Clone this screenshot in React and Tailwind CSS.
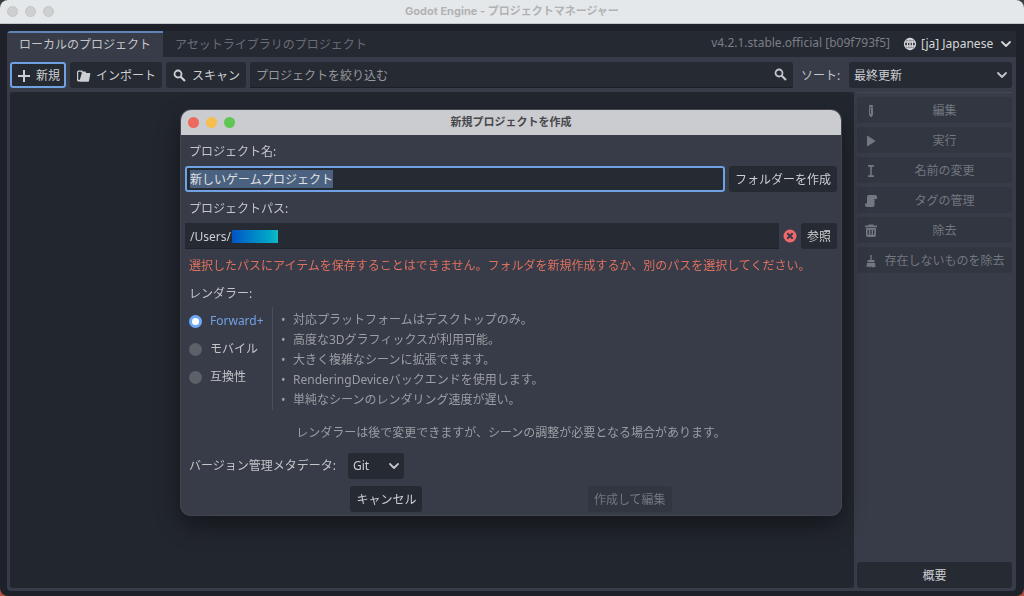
import { useEffect, useRef, useState } from 'react';

const Icon = ({ children, className = '' }) => (
  <svg viewBox="0 0 16 16" fill="currentColor" aria-hidden="true" className={`size-4 shrink-0 ${className}`}>
    {children}
  </svg>
);

const PlusIcon = () => (
  <Icon>
    <path d="M7 2v5H2v2h5v5h2V9h5V7H9V2z" />
  </Icon>
);

const FolderIcon = () => (
  <Icon>
    <path d="M2.500 2.500A1.500 1.500 0 0 0 1 4V12A1.500 1.500 0 0 0 2.500 13.500H4V12L2.200 11.500V4.200A.5 .5 0 0 1 2.700 3.700H5A.5 .5 0 0 1 5.500 4.200V5H10V4.500A1 1 0 0 0 9 3.500H7L6 2.500z" />
    <path d="M6.500 5a1 1 0 0 0-1 .8V6.500H5.300L3.600 12.700a1 1 0 0 0 1 1H12a1 1 0 0 0 1-.8L14.200 6.500V5z" />
  </Icon>
);

const SearchIcon = () => (
  <Icon>
    <circle cx="6" cy="6" r="3.500" fill="none" stroke="currentColor" strokeWidth="1.800" />
    <path d="M8.500 8.500l4.500 4.500" stroke="currentColor" strokeWidth="2.200" />
  </Icon>
);

const GlobeIcon = () => (
  <Icon>
    <g fill="none" stroke="currentColor" strokeWidth="1.300">
      <circle cx="8" cy="8" r="5.500" />
      <ellipse cx="8" cy="8" rx="2.500" ry="5.500" />
      <path d="M8 2.500v11M3 6h10M3 10h10" />
    </g>
  </Icon>
);

const ChevronIcon = ({ className }) => (
  <Icon className={className}>
    <path d="M4 6l4 4 4-4" fill="none" stroke="currentColor" strokeWidth="1.800" strokeLinecap="round" strokeLinejoin="round" />
  </Icon>
);

const ErrorIcon = () => (
  <Icon className="text-[#f0686b]">
    <circle cx="8" cy="8" r="6.500" />
    <path d="M5.300 5.300l5.400 5.400m0-5.400l-5.400 5.400" stroke="#373c48" strokeWidth="2" />
  </Icon>
);

const actions = [
  {
    label: '編集',
    icon: (
      <Icon>
        <path d="M7 2a1 1 0 0 0-1 1v1h4V3a1 1 0 0 0-1-1z" />
        <path fillRule="evenodd" d="M6 4.600v7.400l2 2.500 2-2.500V4.600zm1.200 1V11h.8V5.600z" />
      </Icon>
    ),
  },
  { label: '実行', icon: <Icon><path d="M4 12.500a.7 .7 0 0 0 1 .6l7-4.500a.7 .7 0 0 0 0-1.200L5 2.900a.7 .7 0 0 0-1 .6z" /></Icon> },
  { label: '名前の変更', icon: <Icon><path d="M5 2v1.700h2.200v8.600H5V14h6v-1.700H8.800V3.700H11V2z" /></Icon> },
  { label: 'タグの管理', icon: <Icon><path d="M6 2a2 2 0 0 0-2 2v6.500H2v1.500a2 2 0 0 0 2 2h5.500a2 2 0 0 0 2-2V6H14V4a2 2 0 0 0-2-2z" /></Icon> },
  {
    label: '除去',
    icon: (
      <Icon>
        <path d="M5.500 1.500v1H2v1.700h12V2.500h-3.500v-1z" />
        <path fillRule="evenodd" d="M3 5v7a2 2 0 0 0 2 2h6a2 2 0 0 0 2-2V5zm1.700 1.700h1.200v5H4.700zm2.700 0h1.200v5H7.400zm2.700 0h1.200v5h-1.200z" />
      </Icon>
    ),
  },
  { label: '存在しないものを除去', icon: <Icon><path d="M7.300 2v5H4.500v2.300h7V7H8.700V2zM4 10l-.5 4 2.700-.5v.7l2.600-.7v.7l3.700-.2-.5-4z" /></Icon> },
];

const renderers = ['Forward+', 'モバイル', '互換性'];

const rendererInfo = [
  '対応プラットフォームはデスクトップのみ。',
  '高度な3Dグラフィックスが利用可能。',
  '大きく複雑なシーンに拡張できます。',
  'RenderingDeviceバックエンドを使用します。',
  '単純なシーンのレンダリング速度が遅い。',
];

const Button = ({ children, className = '', ...props }) => (
  <button
    type="button"
    className={`flex h-[26px] shrink-0 items-center gap-1 rounded-[3px] bg-[#262a32] px-1.5 pt-0.5 text-[#cdcfd2] disabled:bg-[#313641] disabled:text-[#73777f] ${className}`}
    {...props}
  >
    {children}
  </button>
);

const NewProjectDialog = () => {
  const nameRef = useRef(null);
  const [name, setName] = useState('新しいゲームプロジェクト');
  const [path, setPath] = useState('/Users/');
  const [renderer, setRenderer] = useState('Forward+');

  // Select the default name so that typing replaces it
  useEffect(() => {
    nameRef.current.focus();
    nameRef.current.select();
  }, []);

  return (
    <div
      role="dialog"
      aria-labelledby="dialog-title"
      className="w-[660px] max-w-full overflow-hidden rounded-[10px] bg-[#373c48] shadow-[0_10px_24px_rgba(0,0,0,0.45)] ring-1 ring-[#41454f]"
    >
      <header className="relative flex h-[25px] items-center justify-center bg-[#cbccd0]">
        <div className="absolute left-[7px] flex gap-[7px]">
          <span className="size-[11px] rounded-full bg-[#ed6a5e]" />
          <span className="size-[11px] rounded-full bg-[#f5bf4f]" />
          <span className="size-[11px] rounded-full bg-[#61c554]" />
        </div>
        <h2 id="dialog-title" className="text-[11px] font-bold text-[#47484b]">新規プロジェクトを作成</h2>
      </header>

      <form className="flex flex-col px-1 pt-1 pb-[3px]" onSubmit={(e) => e.preventDefault()}>
        <label htmlFor="project-name" className="flex h-[26px] items-center px-1">プロジェクト名:</label>
        <div className="mt-px flex gap-1">
          <input
            id="project-name"
            ref={nameRef}
            value={name}
            onChange={(e) => setName(e.target.value)}
            className="h-[26px] min-w-0 flex-1 rounded-[3px] border-2 border-[#70a1e3] bg-[#262a32] px-[3px] text-[#e0e1e3] outline-none selection:bg-[#4a6180] selection:text-[#e0e1e3]"
          />
          <Button>フォルダーを作成</Button>
        </div>

        <label htmlFor="project-path" className="mt-1 flex h-[26px] items-center px-1">プロジェクトパス:</label>
        <div className="mt-px flex items-center gap-[3px]">
          <div className="relative min-w-0 flex-1">
            <input
              id="project-path"
              value={path}
              onChange={(e) => setPath(e.target.value)}
              className="h-[26px] w-full border-b border-[#1f2228] bg-[#262a32] px-[5px] pt-0.5 text-[#cdcfd2] outline-none"
            />
            <span className="absolute top-[7px] left-[47px] h-[13px] w-[46px] bg-linear-to-r from-[#0453c4] to-[#14b8c6]" />
          </div>
          <ErrorIcon />
          <Button>参照</Button>
        </div>
        <p className="mt-[5px] flex h-6 items-center px-1 text-[#e0705f]">
          選択したパスにアイテムを保存することはできません。フォルダを新規作成するか、別のパスを選択してください。
        </p>

        <fieldset className="mt-1">
          <legend className="flex h-6 items-center px-1">レンダラー:</legend>
          <div className="mt-px flex">
            <div className="flex w-[88px] flex-col border-r border-[#4a4e58] pb-[18px]">
              {renderers.map((item) => (
                <label key={item} className="flex h-7 items-center gap-2 pl-1 has-checked:text-[#70a1e3]">
                  <input
                    type="radio"
                    name="renderer"
                    checked={renderer === item}
                    onChange={() => setRenderer(item)}
                    className="size-[13px] appearance-none rounded-full bg-[#5c6068] checked:border-[3px] checked:border-[#70a8f5] checked:bg-white"
                  />
                  {item}
                </label>
              ))}
            </div>
            <ul className="pt-[3px] pl-2 text-[#9b9ea4]">
              {rendererInfo.map((line) => (
                <li key={line} className="flex h-5 items-center gap-2">
                  <span className="w-1 shrink-0">•</span>
                  {line}
                </li>
              ))}
            </ul>
          </div>
        </fieldset>

        <p className="mt-[11px] flex h-6 items-center justify-center text-[#9b9ea4]">
          レンダラーは後で変更できますが、シーンの調整が必要となる場合があります。
        </p>

        <div className="mt-2 flex items-center">
          <label htmlFor="vcs" className="w-[163px] px-1">バージョン管理メタデータ:</label>
          <div className="relative w-14">
            <select id="vcs" className="h-[26px] w-full appearance-none rounded-[3px] bg-[#262a32] px-[5px] text-[#cdcfd2]">
              <option>Git</option>
              <option>なし</option>
            </select>
            <ChevronIcon className="pointer-events-none absolute top-[5px] right-0.5" />
          </div>
        </div>

        <div className="mt-[7px] flex justify-evenly">
          <Button>キャンセル</Button>
          <Button disabled>作成して編集</Button>
        </div>
      </form>
    </div>
  );
};

const App = () => {
  const [filter, setFilter] = useState('');

  return (
    <div className="bg-linear-to-b from-[#3c3d38] to-[#b0503f] font-['Noto_Sans','Noto_Sans_CJK_JP',sans-serif] text-xs text-[#c3c5c9]">
      <div className="flex h-screen flex-col overflow-hidden rounded-lg bg-[#1e2129]">
        {/* Window title bar */}
        <header className="relative flex h-6 shrink-0 items-center justify-center border-b border-[#c4c7ca] bg-[#e5e8eb]">
          <div className="absolute left-[7px] flex gap-[7px]">
            <span className="size-[11px] rounded-full border border-[#c3c4c6] bg-[#cecfd1]" />
            <span className="size-[11px] rounded-full border border-[#c3c4c6] bg-[#cecfd1]" />
            <span className="size-[11px] rounded-full border border-[#c3c4c6] bg-[#cecfd1]" />
          </div>
          <h1 className="font-['Inter','Noto_Sans_CJK_JP',sans-serif] text-[11px] font-bold text-[#b1b2b3]">
            Godot Engine - プロジェクトマネージャー
          </h1>
        </header>

        <main className="mt-[7px] mr-2 mb-[5px] ml-[7px] flex min-h-0 flex-1 flex-col overflow-hidden rounded-[4px] bg-[#373c48]">
          {/* Tabs, version and language */}
          <div className="flex h-[26px] shrink-0 items-stretch bg-[#252932]">
            <button type="button" className="border-t-2 border-[#5d85b8] bg-[#373c48] px-3 text-[#c3c5c9]">ローカルのプロジェクト</button>
            <button type="button" className="border-t-2 border-transparent px-3 text-[#6a6d75]">アセットライブラリのプロジェクト</button>
            <div className="ml-auto flex items-center">
              <a href="#version" className="pb-0.5 text-[#7b7e85]">v4.2.1.stable.official [b09f793f5]</a>
              <div className="relative ml-3 flex items-center text-[#d5d6d9]">
                <GlobeIcon />
                <select aria-label="言語" className="h-[26px] w-[98px] appearance-none bg-transparent pl-[3px]">
                  <option>[ja] Japanese</option>
                </select>
                <ChevronIcon className="pointer-events-none absolute right-0.5" />
              </div>
            </div>
          </div>

          <div className="flex min-h-0 flex-1 flex-col pt-[5px] pr-1 pb-[3px] pl-[3px]">
            {/* Toolbar */}
            <div className="flex shrink-0 items-center gap-1">
              <Button className="outline-2 -outline-offset-2 outline-[#70a1e3]"><PlusIcon />新規</Button>
              <Button><FolderIcon />インポート</Button>
              <Button><SearchIcon />スキャン</Button>
              <div className="relative min-w-0 flex-1">
                <input
                  type="text"
                  aria-label="プロジェクトを絞り込む"
                  placeholder="プロジェクトを絞り込む"
                  value={filter}
                  onChange={(e) => setFilter(e.target.value)}
                  className="h-[26px] w-full rounded-t-[3px] border-b border-[#1c1f25] bg-[#262a32] pt-0.5 pr-7 pl-1.5 outline-none placeholder:text-[#96989d]"
                />
                <span className="pointer-events-none absolute top-[5px] right-1"><SearchIcon /></span>
              </div>
              <label htmlFor="sort" className="w-12 pt-0.5 pl-1">ソート:</label>
              <div className="relative w-[163px]">
                <select id="sort" className="h-[26px] w-full appearance-none rounded-[3px] bg-[#262a32] px-[5px] pt-0.5 text-[#cdcfd2]">
                  <option>最終更新</option>
                  <option>名前</option>
                  <option>パス</option>
                </select>
                <ChevronIcon className="pointer-events-none absolute top-[5px] right-0.5" />
              </div>
            </div>

            <div className="mt-1 flex min-h-0 flex-1 gap-[3px]">
              <section aria-label="プロジェクト一覧" className="flex-1 rounded-[3px] bg-[#22262e]" />

              <aside className="flex w-[155px] shrink-0 flex-col gap-1">
                <hr className="border-[#444955]" />
                {actions.map(({ label, icon }) => (
                  <Button key={label} disabled>
                    {icon}
                    <span className="flex-1 text-center">{label}</span>
                  </Button>
                ))}
                <Button className="mt-auto justify-center">概要</Button>
              </aside>
            </div>
          </div>
        </main>
      </div>

      <div className="fixed inset-x-0 top-[110px] flex justify-center pr-0.5">
        <NewProjectDialog />
      </div>
    </div>
  );
};

export default App;
